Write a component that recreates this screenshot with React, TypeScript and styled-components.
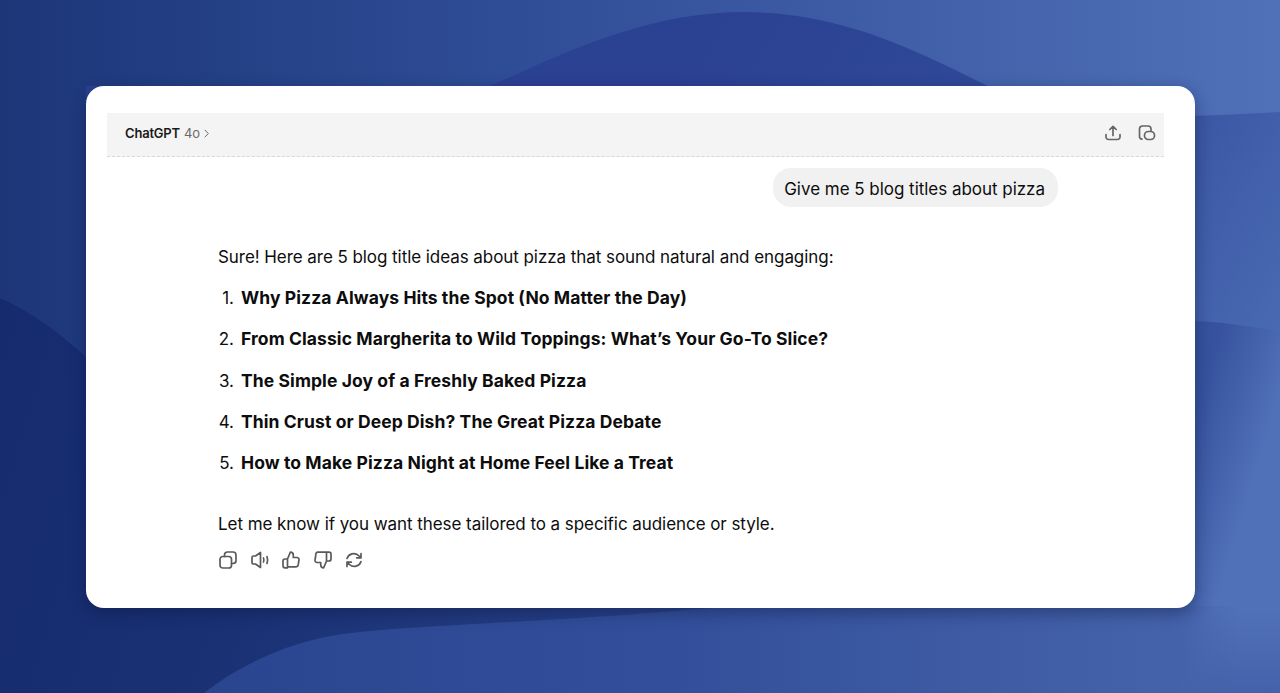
import React from "react";
import styled, { createGlobalStyle } from "styled-components";

const Global = createGlobalStyle`
  html, body { margin: 0; padding: 0; height: 100%; overflow: hidden; background: #2a4590; }
  #root { height: 100%; }
`;

const Page = styled.div`
  position: relative;
  width: 1280px;
  height: 693px;
  padding: 86px 85px 85px 86px;
  box-sizing: border-box;
  font-family: Inter, "Liberation Sans", sans-serif;
  color: #0d0d0d;
  overflow: hidden;
`;

const Backdrop = styled.svg`
  position: absolute;
  inset: 0;
  width: 1280px;
  height: 693px;
`;

const Card = styled.main`
  position: relative;
  height: 522px;
  box-sizing: border-box;
  background: #fff;
  border-radius: 18px;
  padding: 27px 31px 0 21px;
  box-shadow: 0 5px 16px rgba(12, 22, 60, 0.42);
`;

const Header = styled.header`
  height: 44px;
  box-sizing: border-box;
  display: flex;
  align-items: center;
  justify-content: space-between;
  padding: 0 8px 3px 18px;
  background: #f4f4f4;
  border-bottom: 1px dashed #d8d8d8;
`;

const ModelName = styled.div`
  display: flex;
  align-items: center;
  font-size: 13px;
  font-weight: 600;
  letter-spacing: -0.2px;
  color: #1a1a1a;
`;

const ModelVersion = styled.span`
  margin: 0 2px 0 4px;
  color: #6b6b6b;
  font-weight: 400;
  letter-spacing: 0;
`;

const HeaderActions = styled.div`
  display: flex;
  align-items: center;
  gap: 16px;
  color: #666;
`;

const Conversation = styled.section`
  padding: 11px 106px 0 111px;
`;

const UserRow = styled.div`
  display: flex;
  justify-content: flex-end;
`;

const Bubble = styled.div`
  height: 39px;
  box-sizing: border-box;
  display: flex;
  align-items: center;
  padding: 2px 13px 0 11px;
  border-radius: 18px;
  background: #f1f1f1;
  font-size: 17px;
  letter-spacing: -0.03px;
`;

const Paragraph = styled.p<{ $top: number }>`
  margin: ${(p) => p.$top}px 0 0;
  font-size: 17px;
  line-height: 24px;
  letter-spacing: -0.06px;
`;

const List = styled.ol`
  list-style: none;
  margin: 17px 0 0;
  padding: 0;
  display: flex;
  flex-direction: column;
  gap: 17.25px;
`;

const Item = styled.li`
  display: flex;
  font-size: 17px;
  line-height: 24px;
`;

const Num = styled.span`
  width: 23px;
  flex: none;
  text-align: right;
  padding-right: 7px;
  box-sizing: border-box;
`;

const Title = styled.strong`
  font-size: 17.5px;
  font-weight: 700;
  letter-spacing: 0.09px;
`;

const Actions = styled.div`
  display: flex;
  align-items: center;
  gap: 11.5px;
  margin-top: 14px;
  color: #5a5a5a;
`;

const Icon = styled.svg<{ $size?: number }>`
  width: ${(p) => p.$size ?? 20}px;
  height: ${(p) => p.$size ?? 20}px;
  fill: none;
  stroke: currentColor;
  stroke-width: 1.7;
  stroke-linecap: round;
  stroke-linejoin: round;
  flex: none;
`;

const Chevron = styled(Icon)`
  color: #666;
  stroke-width: 2.6;
`;

const titles = [
  "Why Pizza Always Hits the Spot (No Matter the Day)",
  "From Classic Margherita to Wild Toppings: What’s Your Go-To Slice?",
  "The Simple Joy of a Freshly Baked Pizza",
  "Thin Crust or Deep Dish? The Great Pizza Debate",
  "How to Make Pizza Night at Home Feel Like a Treat",
];

export default function App() {
  return (
    <Page>
      <Global />
      <Backdrop viewBox="0 0 1280 693" aria-hidden="true">
        <defs>
          <linearGradient id="sky" gradientUnits="userSpaceOnUse" x1="0" y1="0" x2="1280" y2="0">
            <stop offset="0" stopColor="#1c3678" />
            <stop offset="0.4" stopColor="#2f4d97" />
            <stop offset="1" stopColor="#5070b8" />
          </linearGradient>
          <linearGradient id="hill" gradientUnits="userSpaceOnUse" x1="700" y1="20" x2="1280" y2="340">
            <stop offset="0" stopColor="#2b4192" />
            <stop offset="0.55" stopColor="#314b9a" />
            <stop offset="1" stopColor="#4a6ab3" />
          </linearGradient>
          <linearGradient id="wedge" gradientUnits="userSpaceOnUse" x1="0" y1="300" x2="1200" y2="660">
            <stop offset="0" stopColor="#152b6e" />
            <stop offset="0.25" stopColor="#1a3174" />
            <stop offset="0.94" stopColor="#37539f" />
            <stop offset="1" stopColor="#5070b8" />
          </linearGradient>
          <linearGradient id="dune" gradientUnits="userSpaceOnUse" x1="200" y1="0" x2="1240" y2="0">
            <stop offset="0" stopColor="#2a4590" />
            <stop offset="0.45" stopColor="#334f9b" />
            <stop offset="0.92" stopColor="#4462a9" />
            <stop offset="1" stopColor="#4462a9" stopOpacity="0" />
          </linearGradient>
          <linearGradient id="dusk" gradientUnits="userSpaceOnUse" x1="0" y1="610" x2="0" y2="693">
            <stop offset="0" stopColor="#3f5ca5" stopOpacity="0" />
            <stop offset="1" stopColor="#3f5ca5" stopOpacity="0.7" />
          </linearGradient>
        </defs>
        <rect width="1280" height="693" fill="url(#sky)" />
        <path d="M490 86C570 50 650 12 745 12C845 12 925 55 988 86L1000 118C1100 119 1195 117 1280 112V693H86V86Z" fill="url(#hill)" />
        <path d="M0 298C32 312 62 335 86 357L200 400H1100L1195 321C1225 322 1255 327 1280 332V693H0Z" fill="url(#wedge)" />
        <rect x="1000" y="610" width="280" height="83" fill="url(#dusk)" />
        <path d="M204 693C240 665 290 640 351 633C420 625 560 622 735 606H1240V693Z" fill="url(#dune)" />
      </Backdrop>
      <Card>
        <Header>
          <ModelName>
            ChatGPT<ModelVersion>4o</ModelVersion>
            <Chevron viewBox="0 0 24 24" $size={9}>
              <path d="M8 3l9 9-9 9" />
            </Chevron>
          </ModelName>
          <HeaderActions>
            <Icon viewBox="0 0 18 18" $size={18}>
              <path d="M9 11.500V2.500M5.800 5.500L9 2.300 12.200 5.500M2 10.500V13a2.500 2.500 0 0 0 2.500 2.500h9A2.500 2.500 0 0 0 16 13v-2.500" />
            </Icon>
            <Icon viewBox="0 0 18 18" $size={18}>
              <path d="M4 15.200A3 3 0 0 1 1.500 12.200V5A3 3 0 0 1 4.500 2h5.500A3 3 0 0 1 13 5v1.500" />
              <rect x="6.500" y="7.500" width="10" height="8" rx="3.800" />
            </Icon>
          </HeaderActions>
        </Header>
        <Conversation>
          <UserRow>
            <Bubble>Give me 5 blog titles about pizza</Bubble>
          </UserRow>
          <Paragraph $top={38}>Sure! Here are 5 blog title ideas about pizza that sound natural and engaging:</Paragraph>
          <List>
            {titles.map((t, i) => (
              <Item key={t}>
                <Num>{i + 1}.</Num>
                <Title>{t}</Title>
              </Item>
            ))}
          </List>
          <Paragraph $top={37}>Let me know if you want these tailored to a specific audience or style.</Paragraph>
          <Actions>
            <Icon viewBox="0 0 20 20">
              <rect x="2" y="6.500" width="11.500" height="11.500" rx="2.800" />
              <path d="M6.500 6.500V5A3 3 0 0 1 9.500 2H15a3 3 0 0 1 3 3v5.500a3 3 0 0 1-3 3h-1.500" />
            </Icon>
            <Icon viewBox="0 0 20 20">
              <path d="M2 7.500A1.500 1.500 0 0 1 3.500 6H5.500l5-3.500v15l-5-3.500H3.500A1.500 1.500 0 0 1 2 12.500Z" />
              <path d="M13.500 8c.5 1.300.5 2.700 0 4M17 6.500c.8 2.300.8 4.700 0 7" />
            </Icon>
            <Icon viewBox="0 0 20 20">
              <path d="M6.500 9l2.800-6.800c1.900 0 3 1.100 3 2.800v2.500h3.700a2 2 0 0 1 2 2.300l-.8 5.200a2.200 2.200 0 0 1-2.200 1.800H6.500ZM6.500 9H4a2 2 0 0 0-2 2v4.800a2 2 0 0 0 2 2h2.500" />
            </Icon>
            <Icon viewBox="0 0 20 20">
              <path d="M13.500 11l-2.800 6.800c-1.900 0-3-1.100-3-2.800v-2.500H4a2 2 0 0 1-2-2.300l.8-5.200A2.200 2.200 0 0 1 5 2.200h8.500ZM13.500 11H16a2 2 0 0 0 2-2V4.200a2 2 0 0 0-2-2h-2.500" />
            </Icon>
            <Icon viewBox="0 0 20 20">
              <path d="M3 8.500A7 7 0 0 1 14.500 5.500L17 7.800M17 3.500v4.300h-4.300M17 11.500A7 7 0 0 1 5.500 14.500L3 12.200M3 16.500v-4.300h4.300" />
            </Icon>
          </Actions>
        </Conversation>
      </Card>
    </Page>
  );
}
